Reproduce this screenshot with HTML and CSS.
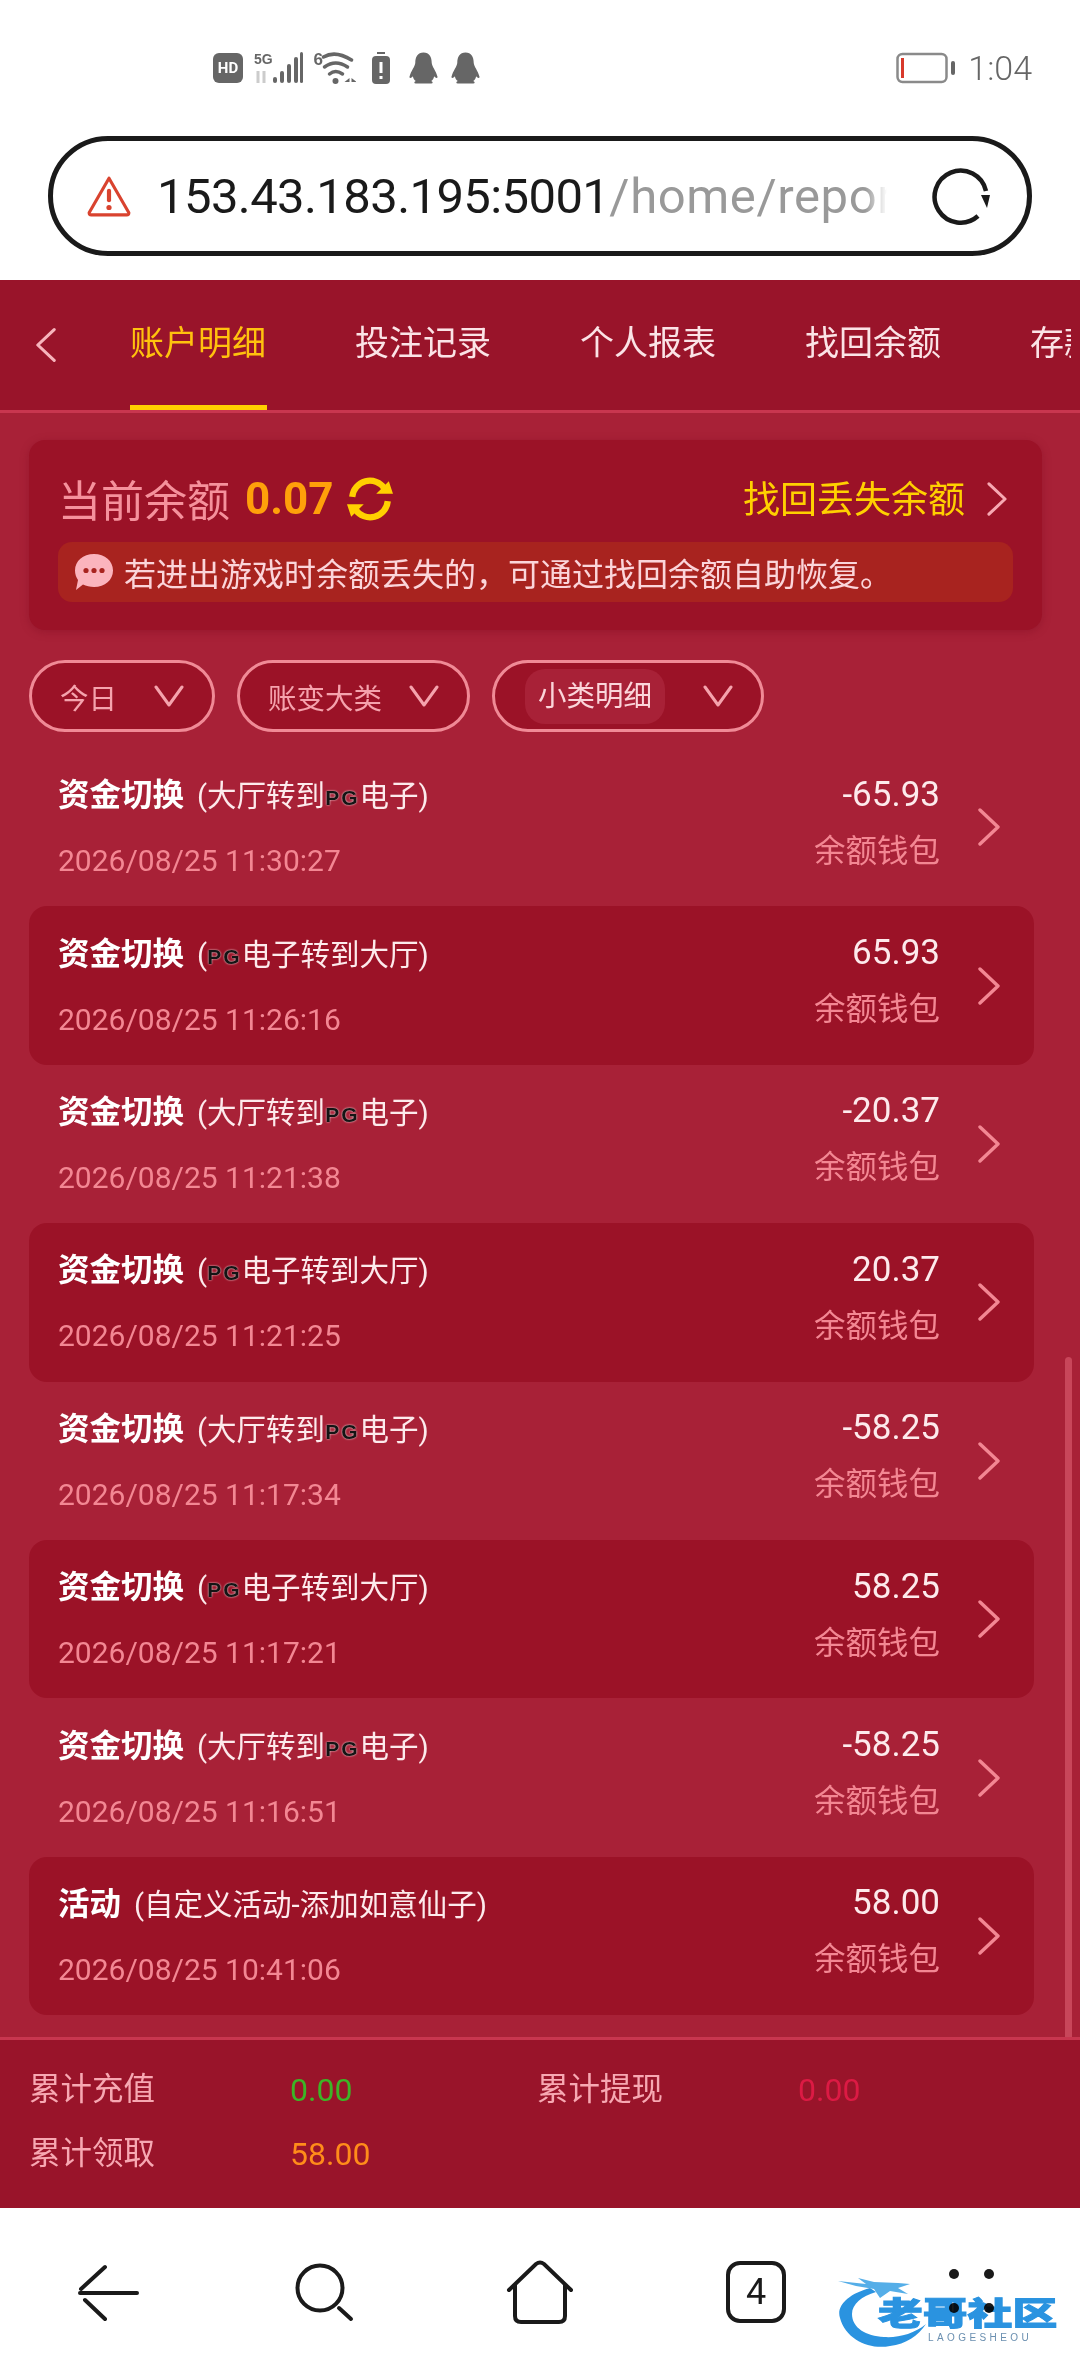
FILE: index.html
```html
<!DOCTYPE html>
<html lang="zh-CN">
<head>
  <meta charset="utf-8">
  <title>账户明细</title>
  <link rel="stylesheet" href="styles.css">
</head>
<body>
  <svg class="defs" width="0" height="0">
    <symbol id="chev" viewBox="0 0 22 38"><path d="M2 2 L20 19 L2 36" fill="none" stroke="currentColor" stroke-width="3.4" stroke-linecap="round" stroke-linejoin="round"/></symbol>
    <symbol id="back" viewBox="0 0 22 38"><path d="M20 2 L2 19 L20 36" fill="none" stroke="currentColor" stroke-width="3.4" stroke-linecap="round" stroke-linejoin="round"/></symbol>
    <symbol id="down" viewBox="0 0 30 22"><path d="M2 2 L15 20 L28 2" fill="none" stroke="currentColor" stroke-width="3" stroke-linecap="round" stroke-linejoin="round"/></symbol>
    <symbol id="penguin" viewBox="0 0 30 32"><path d="M15 0 C9 0 6.500 5 6.500 10.500 C6.500 14 2 19 .5 25 C.5 27 2.500 26.500 4 24.500 C4.500 27 5.500 28.500 7 29.500 C5 30.500 5 32 7 32 H23 C25 32 25 30.500 23 29.500 C24.500 28.500 25.500 27 26 24.500 C27.500 26.500 29.500 27 29.500 25 C28 19 23.500 14 23.500 10.500 C23.500 5 21 0 15 0 Z" fill="#666"/></symbol>
  </svg>

  <div class="phone">
    <div class="status-bar">
      <div class="status-icons">
        <span class="hd">HD</span>
        <svg class="ic-signal" viewBox="0 0 50 34">
          <text x="1" y="13" class="net-text">5G</text>
          <rect x="20" y="26" width="4" height="6" rx="2" fill="#666"/>
          <rect x="27" y="20" width="4" height="12" rx="2" fill="#666"/>
          <rect x="34" y="13" width="4" height="19" rx="2" fill="#666"/>
          <rect x="41" y="6" width="4" height="26" rx="2" fill="#666"/>
          <rect x="47" y="1" width="3" height="31" rx="1.500" fill="#666"/>
          <path d="M5 20 V32 M11 20 V32" stroke="#ccc" stroke-width="3"/>
        </svg>
        <svg class="ic-wifi" viewBox="0 0 42 34">
          <text x="0" y="14" class="net-text big">6</text>
          <path d="M10 6 Q22 -1 38 9" fill="none" stroke="#666" stroke-width="3.500" stroke-linecap="round"/>
          <path d="M11 16 Q22 8 34 16" fill="none" stroke="#666" stroke-width="3.500" stroke-linecap="round"/>
          <path d="M16 23 Q22 18 29 23" fill="none" stroke="#666" stroke-width="3.500" stroke-linecap="round"/>
          <circle cx="22" cy="30" r="3" fill="#666"/>
          <path d="M36 27 L31 31 H36 Z M38 27 L43 31 H38 Z" fill="#666"/>
        </svg>
        <svg class="ic-alert" viewBox="0 0 18 32">
          <rect x="5" y="0" width="8" height="2" fill="#666"/>
          <rect x="0" y="4" width="18" height="28" rx="4" fill="#666"/>
          <rect x="7.500" y="10" width="3" height="11" fill="#fff"/>
          <rect x="7.500" y="24" width="3" height="3" fill="#fff"/>
        </svg>
        <svg class="ic-qq first"><use href="#penguin"/></svg>
        <svg class="ic-qq"><use href="#penguin"/></svg>
      </div>
      <div class="status-right">
        <svg class="ic-battery" viewBox="0 0 60 32">
          <rect x="1.500" y="2" width="49" height="28" rx="5" fill="none" stroke="#8a8a8a" stroke-width="2.500"/>
          <rect x="5" y="6" width="3" height="20" fill="#d8392b"/>
          <rect x="55" y="9" width="4" height="14" rx="2" fill="#666"/>
        </svg>
        <span class="clock">1:04</span>
      </div>
    </div>

    <div class="address-wrap">
      <div class="address-bar">
        <svg class="ic-warn" viewBox="0 0 44 40">
          <path d="M22 3 L41 36 Q41 38 39 38 H5 Q3 38 3 36 Z" fill="none" stroke="#d9432f" stroke-width="3" stroke-linejoin="round"/>
          <rect x="20" y="13" width="4" height="13" rx="2" fill="#d9432f"/>
          <circle cx="22" cy="31" r="2.500" fill="#d9432f"/>
        </svg>
        <div class="url"><span class="host">153.43.183.195:5001</span><span class="path">/home/report</span></div>
        <svg class="ic-reload" viewBox="0 0 58 58">
          <path d="M54 24 A26 26 0 1 0 46 49" fill="none" stroke="#1a1a1a" stroke-width="4.500"/>
          <polygon points="49,28 58,28 55,41" fill="#1a1a1a"/>
        </svg>
      </div>
    </div>

    <div class="tabs">
      <svg class="tab-back"><use href="#back"/></svg>
      <div class="tab-list">
        <a class="tab active">账户明细</a>
        <a class="tab">投注记录</a>
        <a class="tab">个人报表</a>
        <a class="tab">找回余额</a>
        <a class="tab">存款记录</a>
      </div>
    </div>

    <div class="content">
      <div class="balance-card">
        <div class="balance-top">
          <span class="balance-label">当前余额</span>
          <span class="balance-num">0.07</span>
          <svg class="ic-sync" viewBox="0 0 44 44">
            <path d="M5 20 A17 17 0 0 1 36 12" fill="none" stroke="#ffd000" stroke-width="6"/>
            <path d="M39 24 A17 17 0 0 1 8 32" fill="none" stroke="#ffd000" stroke-width="6"/>
            <polygon points="28,17 44,17 40,5" fill="#ffd000"/>
            <polygon points="16,27 0,27 4,39" fill="#ffd000"/>
          </svg>
          <a class="recover-link">找回丢失余额</a>
          <svg class="recover-chev"><use href="#chev"/></svg>
        </div>
        <div class="notice">
          <svg class="ic-bubble" viewBox="0 0 38 36">
            <path d="M19 0 C30 0 38 7 38 16.500 C38 26 30 33 19 33 C15 33 11 32 8 30.500 L1 36 L3 26 C1 23 0 20 0 16.500 C0 7 8 0 19 0 Z" fill="#fbb4bd"/>
            <circle cx="11" cy="16.500" r="2.600" fill="#a8231f"/>
            <circle cx="19" cy="16.500" r="2.600" fill="#a8231f"/>
            <circle cx="27" cy="16.500" r="2.600" fill="#a8231f"/>
          </svg>
          <span>若进出游戏时余额丢失的，可通过找回余额自助恢复。</span>
        </div>
      </div>

      <div class="filters">
        <div class="pill pill-day"><span>今日</span><svg class="pill-chev"><use href="#down"/></svg></div>
        <div class="pill pill-type"><span>账变大类</span><svg class="pill-chev"><use href="#down"/></svg></div>
        <div class="pill pill-sub"><span class="pill-on">小类明细</span><svg class="pill-chev"><use href="#down"/></svg></div>
      </div>

      <div class="record-list">
        <div class="record">
          <div class="rec-left">
            <div class="rec-title"><b>资金切换</b><span class="rec-sub">(大厅转到<i class="pg">PG</i>电子)</span></div>
            <div class="rec-time">2026/08/25 11:30:27</div>
          </div>
          <div class="rec-right"><div class="rec-amount">-65.93</div><div class="rec-wallet">余额钱包</div></div>
          <svg class="rec-chev"><use href="#chev"/></svg>
        </div>
        <div class="record alt">
          <div class="rec-left">
            <div class="rec-title"><b>资金切换</b><span class="rec-sub">(<i class="pg">PG</i>电子转到大厅)</span></div>
            <div class="rec-time">2026/08/25 11:26:16</div>
          </div>
          <div class="rec-right"><div class="rec-amount">65.93</div><div class="rec-wallet">余额钱包</div></div>
          <svg class="rec-chev"><use href="#chev"/></svg>
        </div>
        <div class="record">
          <div class="rec-left">
            <div class="rec-title"><b>资金切换</b><span class="rec-sub">(大厅转到<i class="pg">PG</i>电子)</span></div>
            <div class="rec-time">2026/08/25 11:21:38</div>
          </div>
          <div class="rec-right"><div class="rec-amount">-20.37</div><div class="rec-wallet">余额钱包</div></div>
          <svg class="rec-chev"><use href="#chev"/></svg>
        </div>
        <div class="record alt">
          <div class="rec-left">
            <div class="rec-title"><b>资金切换</b><span class="rec-sub">(<i class="pg">PG</i>电子转到大厅)</span></div>
            <div class="rec-time">2026/08/25 11:21:25</div>
          </div>
          <div class="rec-right"><div class="rec-amount">20.37</div><div class="rec-wallet">余额钱包</div></div>
          <svg class="rec-chev"><use href="#chev"/></svg>
        </div>
        <div class="record">
          <div class="rec-left">
            <div class="rec-title"><b>资金切换</b><span class="rec-sub">(大厅转到<i class="pg">PG</i>电子)</span></div>
            <div class="rec-time">2026/08/25 11:17:34</div>
          </div>
          <div class="rec-right"><div class="rec-amount">-58.25</div><div class="rec-wallet">余额钱包</div></div>
          <svg class="rec-chev"><use href="#chev"/></svg>
        </div>
        <div class="record alt">
          <div class="rec-left">
            <div class="rec-title"><b>资金切换</b><span class="rec-sub">(<i class="pg">PG</i>电子转到大厅)</span></div>
            <div class="rec-time">2026/08/25 11:17:21</div>
          </div>
          <div class="rec-right"><div class="rec-amount">58.25</div><div class="rec-wallet">余额钱包</div></div>
          <svg class="rec-chev"><use href="#chev"/></svg>
        </div>
        <div class="record">
          <div class="rec-left">
            <div class="rec-title"><b>资金切换</b><span class="rec-sub">(大厅转到<i class="pg">PG</i>电子)</span></div>
            <div class="rec-time">2026/08/25 11:16:51</div>
          </div>
          <div class="rec-right"><div class="rec-amount">-58.25</div><div class="rec-wallet">余额钱包</div></div>
          <svg class="rec-chev"><use href="#chev"/></svg>
        </div>
        <div class="record alt">
          <div class="rec-left">
            <div class="rec-title"><b>活动</b><span class="rec-sub">(自定义活动-添加如意仙子)</span></div>
            <div class="rec-time">2026/08/25 10:41:06</div>
          </div>
          <div class="rec-right"><div class="rec-amount">58.00</div><div class="rec-wallet">余额钱包</div></div>
          <svg class="rec-chev"><use href="#chev"/></svg>
        </div>
      </div>
      <div class="scroll-thumb"></div>
    </div>

    <div class="totals">
      <div class="total"><span class="total-label">累计充值</span><span class="total-num green">0.00</span></div>
      <div class="total"><span class="total-label">累计提现</span><span class="total-num red">0.00</span></div>
      <div class="total"><span class="total-label">累计领取</span><span class="total-num orange">58.00</span></div>
    </div>

    <div class="browser-nav">
      <div class="nav-item">
        <svg class="nav-icon" viewBox="0 0 72 72"><path d="M8 37 H65 M9 33 L33 11 M13 44 L33 63" fill="none" stroke="#1a1a1a" stroke-width="4" stroke-linecap="round"/></svg>
      </div>
      <div class="nav-item">
        <svg class="nav-icon" viewBox="0 0 72 72"><circle cx="32" cy="32" r="22.500" fill="none" stroke="#1a1a1a" stroke-width="4"/><path d="M51 52 L63 63" stroke="#1a1a1a" stroke-width="4" stroke-linecap="round"/></svg>
      </div>
      <div class="nav-item">
        <svg class="nav-icon" viewBox="0 0 72 72"><path d="M5 34 L32 8 Q36 5 40 8 L67 34 M11 29 V60 Q11 66 17 66 H55 Q61 66 61 60 V29" fill="none" stroke="#1a1a1a" stroke-width="4" stroke-linecap="round"/></svg>
      </div>
      <div class="nav-item">
        <div class="tab-count">4</div>
      </div>
      <div class="nav-item">
        <svg class="nav-icon" viewBox="0 0 72 72"><circle cx="18" cy="18" r="5" fill="#1a1a1a"/><circle cx="53" cy="18" r="5" fill="#1a1a1a"/><circle cx="18" cy="52" r="5" fill="#1a1a1a"/><circle cx="53" cy="52" r="5" fill="#1a1a1a"/></svg>
      </div>

      <div class="watermark">
        <svg class="wm-dragon" viewBox="0 0 130 70">
          <path d="M32 10 C10 16 -2 28 2 40 C8 62 32 72 52 68 C68 66 80 58 88 46 C76 56 60 60 46 59 C28 58 14 50 14 36 C14 26 24 18 38 14 Z" fill="#2a93e0"/>
          <path d="M0 3 L28 6 L20 0 L36 4 L60 5 L72 6 L60 10 L70 16 L52 13 L42 20 L36 11 L18 8 Z" fill="#55aee8"/>
        </svg>
        <span class="wm-name">老哥社区</span>
        <span class="wm-sub">LAOGESHEOU</span>
      </div>
    </div>
  </div>
</body>
</html>
```

FILE: styles.css
```css
* { box-sizing: border-box; }
html, body { margin: 0; padding: 0; }
body { background: #fff; font-family: Roboto, "Noto Sans CJK SC", sans-serif; }
.defs { position: absolute; }
.phone { width: 1080px; height: 2376px; display: flex; flex-direction: column; overflow: hidden; }

/* status bar */
.status-bar { height: 136px; flex: none; display: flex; align-items: center; justify-content: space-between; padding: 0 48px 0 213px; }
.status-icons { display: flex; align-items: center; gap: 10px; }
.hd { width: 30px; height: 30px; border-radius: 6px; background: #666; color: #fff; font-size: 15px; font-weight: 700; line-height: 30px; text-align: center; }
.ic-signal { width: 50px; height: 34px; }
.ic-wifi { width: 43px; height: 34px; }
.ic-alert { width: 18px; height: 32px; margin-left: 6px; }
.ic-qq { width: 29px; height: 32px; margin-left: 3px; }
.ic-qq.first { margin-left: 9px; }
.net-text { font-family: "Liberation Sans", sans-serif; font-size: 14px; font-weight: 700; fill: #666; }
.net-text.big { font-size: 17px; }
.status-right { display: flex; align-items: center; gap: 12px; }
.ic-battery { width: 60px; height: 32px; }
.clock { font-size: 34px; color: #666; font-weight: 300; }

/* address bar */
.address-wrap { padding: 0 48px 24px; flex: none; }
.address-bar { height: 120px; border: 5px solid #1a1a1a; border-radius: 60px; display: flex; align-items: center; padding: 0 37px 0 33px; }
.ic-warn { width: 46px; height: 42px; flex: none; }
.url { width: 730px; margin-left: 25px; white-space: nowrap; overflow: hidden; font-size: 49px; -webkit-mask-image: linear-gradient(to right, #000 97%, transparent); mask-image: linear-gradient(to right, #000 97%, transparent); }
.host { color: #1a1a1a; letter-spacing: -.6px; }
.path { color: #999; letter-spacing: .6px; }
.ic-reload { width: 58px; height: 58px; margin-left: auto; flex: none; }

/* tabs */
.tabs { height: 133px; flex: none; background: #99142a; border-bottom: 3px solid #c8364f; display: flex; padding-left: 36px; }
.tab-back { width: 20px; height: 36px; margin-top: 47px; color: #f7b4bc; flex: none; }
.tab-list { display: flex; gap: 88px; margin-left: 74px; width: 941px; overflow: hidden; }
.tab { flex: none; width: 137px; height: 130px; line-height: 126px; font-size: 34px; color: #fbe3e6; white-space: nowrap; }
.tab.active { color: #ffc20e; border-bottom: 5px solid #ffd000; }

/* main */
.content { flex: 1; min-height: 0; background: #a82137; padding: 27px 0 0; position: relative; }
.balance-card { margin: 0 38px 0 29px; height: 190px; background: #9b1227; border-radius: 16px; padding: 30px 29px 0 29px; box-shadow: 0 2px 8px rgba(120, 10, 30, .35); }
.balance-top { height: 58px; display: flex; align-items: center; }
.balance-label { font-size: 43px; color: #f5919c; width: 172px; white-space: nowrap; margin-top: -2px; }
.balance-num { font-size: 44px; font-weight: 700; color: #ffa00a; margin-left: 15px; }
.ic-sync { width: 46px; height: 46px; margin-left: 13px; }
.recover-link { margin-left: auto; font-size: 37px; color: #ffd000; white-space: nowrap; margin-top: -4px; }
.recover-chev { width: 22px; height: 34px; margin-left: 21px; margin-right: 5px; color: #f7a8b2; }
.notice { height: 60px; margin-top: 14px; background: #a8231f; border-radius: 14px; display: flex; align-items: center; padding-left: 17px; font-size: 32px; color: #fbd5da; white-space: nowrap; }
.ic-bubble { width: 38px; height: 36px; margin-right: 11px; flex: none; }

.filters { display: flex; gap: 22px; margin: 30px 0 16px 29px; }
.pill { height: 72px; background: #9b1227; border: 3px solid #f08a96; border-radius: 36px; display: flex; align-items: center; font-size: 28.500px; color: #f5a3ad; white-space: nowrap; }
.pill-day { width: 186px; padding-left: 28px; }
.pill-type { width: 233px; padding-left: 28px; }
.pill-sub { width: 272px; padding-left: 30px; }
.pill-on { background: #a82137; border-radius: 20px; height: 55px; line-height: 55px; padding: 0 13px; color: #fbd5da; }
.pill-chev { width: 30px; height: 22px; color: #f5a3ad; margin-left: auto; margin-right: 28px; }

.record { height: 158.400px; margin: 0 46px 0 29px; padding: 0 34px 0 29px; border-radius: 18px; display: flex; align-items: center; }
.record.alt { background: #9b1227; }
.rec-left { flex: 1; min-width: 0; }
.rec-title { height: 44px; line-height: 44px; margin-top: 3px; white-space: nowrap; color: #fff; }
.rec-title b { font-size: 31.500px; font-weight: 700; }
.rec-sub { font-size: 29.500px; color: #fdeaec; margin-left: 13px; }
.pg { display: inline-block; font-style: normal; font-family: "Liberation Sans", sans-serif; font-weight: 700; font-size: 21px; letter-spacing: 2px; color: #141414; text-shadow: 0 0 2px #fff; vertical-align: 1px; }
.rec-time { height: 44px; line-height: 44px; margin-top: 21px; font-size: 30px; color: #f38793; white-space: nowrap; }
.rec-right { text-align: right; margin-top: -8px; }
.rec-amount { height: 44px; line-height: 44px; font-size: 35px; color: #fdeaec; }
.rec-wallet { height: 44px; line-height: 44px; margin-top: 13px; font-size: 31.500px; color: #f38793; white-space: nowrap; }
.rec-chev { width: 22px; height: 38px; margin-left: 38px; color: #f38793; flex: none; }

.scroll-thumb { position: absolute; right: 8px; bottom: 0; width: 7px; height: 680px; background: #c8465a; border-radius: 4px 4px 0 0; }

/* totals */
.totals { height: 171px; flex: none; background: #99142a; border-top: 3px solid #c8364f; padding: 28px 0 0 29px; display: flex; flex-wrap: wrap; align-content: flex-start; row-gap: 20px; }
.total { width: 508px; height: 44px; line-height: 44px; display: flex; font-size: 31.500px; }
.total-label { width: 261px; color: #f7a8b2; white-space: nowrap; }
.total-num { font-size: 32px; }
.green { color: #3cb526; }
.red { color: #dc1a44; }
.orange { color: #ff8c1a; }

/* browser nav */
.browser-nav { height: 168px; flex: none; background: #fff; display: flex; padding-top: 48px; position: relative; }
.nav-item { width: 216px; height: 72px; display: flex; justify-content: center; align-items: center; }
.nav-icon { width: 72px; height: 72px; }
.tab-count { width: 60px; height: 62px; border: 4px solid #1a1a1a; border-radius: 14px; text-align: center; font-size: 36px; line-height: 54px; color: #1a1a1a; }

/* site watermark on top of the screenshot */
.watermark { position: absolute; left: 838px; top: 70px; width: 224px; height: 70px; mix-blend-mode: multiply; }
.wm-dragon { position: absolute; left: 0; top: 0; width: 130px; height: 70px; }
.wm-name { position: absolute; left: 40px; top: 16px; width: 130px; font-size: 32px; line-height: 40px; font-weight: 900; color: #2a93e0; -webkit-text-stroke: 1px #2a93e0; white-space: nowrap; transform: scaleX(1.400); transform-origin: left center; }
.wm-sub { position: absolute; left: 90px; top: 54px; font-family: "Liberation Sans", sans-serif; font-size: 10px; letter-spacing: 3.400px; color: #6a8fb0; white-space: nowrap; }
```
